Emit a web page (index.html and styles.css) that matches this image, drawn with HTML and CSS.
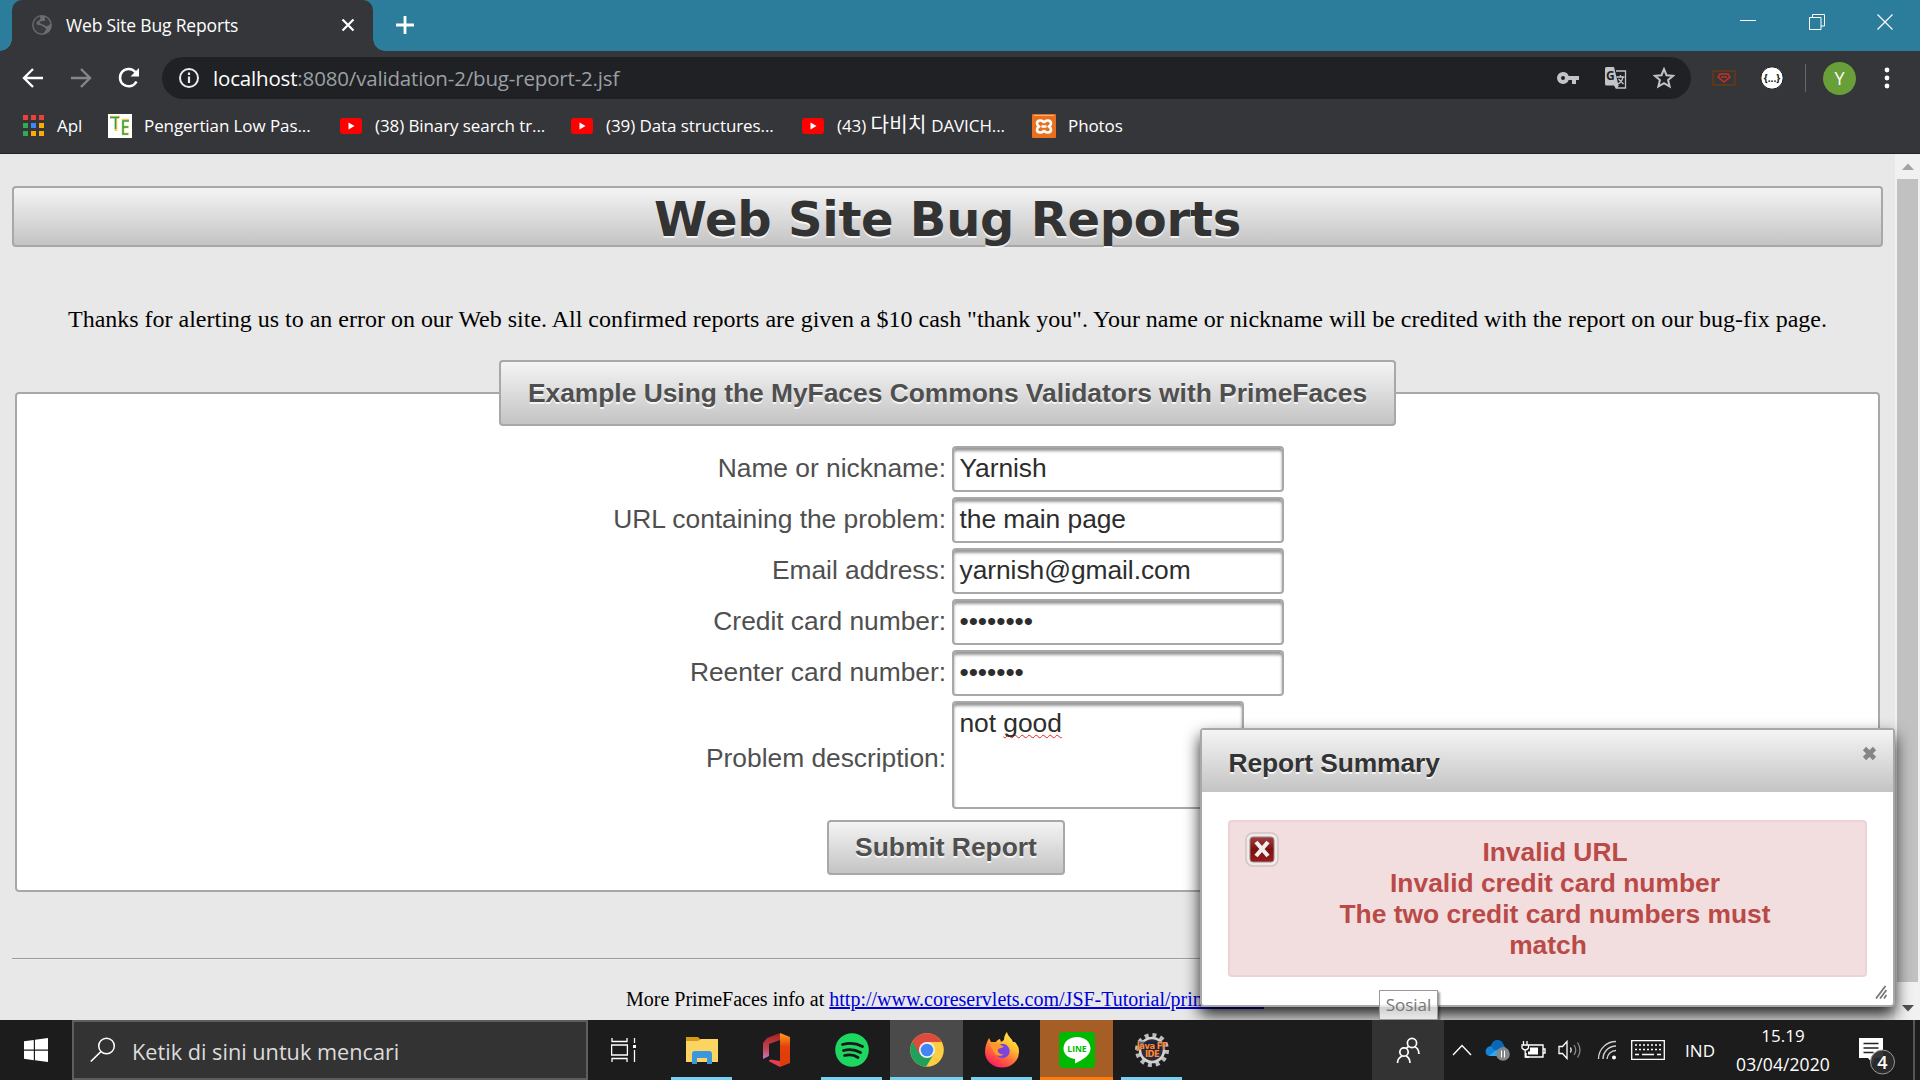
FILE: index.html
```html
<!DOCTYPE html>
<html lang="id">
<head>
<meta charset="utf-8">
<title>Web Site Bug Reports</title>
<link rel="stylesheet" href="styles.css">
</head>
<body>
<div class="tabstrip">
  <div class="tab">
    <svg class="globe" width="22" height="22" viewBox="0 0 22 22"><circle cx="11" cy="11" r="9.900" fill="#6b6d71"/><path d="M9 2.500c1 2 0 3-1 4-2 1-3 2-2 4 2 1 5 0 6 2 1 1 3 1 3 3-1 2-2 3-3 4C6 20 2 15 2.500 10 3 6 6 3 9 2.500zM14 3c3 1 5 4 5.500 7-2 1-3 3-5 2-2-2-5-2-6-3 0-2 3-2 5-2 1-1 0-3 .5-4z" fill="#3a3b3f"/></svg>
    <span class="tab-title">Web Site Bug Reports</span>
    <svg class="tab-close" width="14" height="14" viewBox="0 0 14 14"><path d="M1.500 1.500l11 11M12.500 1.500l-11 11" stroke="#fff" stroke-width="2.200"/></svg>
  </div>
  <svg class="newtab" width="20" height="20" viewBox="0 0 20 20"><path d="M10 1v18M1 10h18" stroke="#fff" stroke-width="2.800"/></svg>
  <div class="winbtns">
    <svg width="16" height="16" viewBox="0 0 16 16"><path d="M0 6.500h16" stroke="#fff"/></svg>
    <svg width="16" height="16" viewBox="0 0 16 16"><path d="M.5 3.500h11.500v12H.5zM3.500 3.500v-3h12v11.500h-3.500" fill="none" stroke="#fff"/></svg>
    <svg width="16" height="16" viewBox="0 0 16 16"><path d="M.5.5l15 15M15.500.5l-15 15" stroke="#fff" stroke-width="1.200"/></svg>
  </div>
</div>
<div class="toolbar">
  <div class="nav">
    <svg width="22" height="22" viewBox="0 0 22 22"><path d="M21 11H2.500M11 2l-9 9 9 9" fill="none" stroke="#fff" stroke-width="2.400"/></svg>
    <svg width="22" height="22" viewBox="0 0 22 22"><path d="M1 11h18.500M11 2l9 9-9 9" fill="none" stroke="#85868a" stroke-width="2.400"/></svg>
    <svg width="22" height="22" viewBox="0 0 22 22"><path d="M18.500 14.500A8.700 8.700 0 1 1 17.500 5.200" fill="none" stroke="#fff" stroke-width="2.500"/><path d="M21 1v8.500h-8.500z" fill="#fff"/></svg>
  </div>
  <div class="omnibox">
    <svg width="22" height="22" viewBox="0 0 22 22"><circle cx="11" cy="11" r="9" fill="none" stroke="#e8eaed" stroke-width="2"/><path d="M11 9.500v6.500M11 5.500v2.400" stroke="#e8eaed" stroke-width="2.200"/></svg>
    <span class="url"><b>localhost</b>:8080/validation-2/bug-report-2.jsf</span>
    <div class="omni-icons">
      <svg width="22" height="22" viewBox="0 0 22 22"><path fill="#c4c4c6" fill-rule="evenodd" d="M6 5a6 6 0 1 0 5.700 8H15v4h4v-4h3V9H11.700A6 6 0 0 0 6 5zm0 4a2 2 0 1 1 0 4 2 2 0 0 1 0-4z"/></svg>
      <svg width="22" height="22" viewBox="0 0 22 22"><path d="M11 4h9.500v17H12l-1-4" fill="none" stroke="#c4c4c6" stroke-width="1.300"/><path d="M1.500 0H9l4.500 18.500h-12A1.500 1.500 0 0 1 0 17V1.500A1.500 1.500 0 0 1 1.500 0zM9 18.500h5L11 22z" fill="#c4c4c6"/><text x="1" y="13" class="g-mark">G</text><path d="M11.500 10h8M15.500 8v2M18 10c-1 4-3 6-5 7M13.500 12l5 5" fill="none" stroke="#c4c4c6" stroke-width="1.300"/></svg>
      <svg width="22" height="22" viewBox="0 0 22 22"><path d="M11 2.200l2.500 6 6.500.600-4.900 4.300 1.500 6.400-5.600-3.400-5.600 3.400 1.500-6.400L2 8.800l6.500-.600z" fill="none" stroke="#c4c4c6" stroke-width="2"/></svg>
    </div>
  </div>
  <svg class="ext1" width="24" height="16" viewBox="0 0 24 16"><path d="M1 1h22v14H1z" fill="none" stroke="#6b3a12" stroke-width="1.300"/><path d="M8 4h8l2 3-6 5-6-5zM9 7h6" fill="none" stroke="#c5301e" stroke-width="1.500"/></svg>
  <svg class="ext2" width="24" height="24" viewBox="0 0 24 24"><circle cx="12" cy="12" r="11.200" fill="#fff" stroke="#18191b"/><text x="12" y="15.500" class="braces">{...}</text></svg>
  <div class="sep"></div>
  <div class="avatar">Y</div>
  <svg class="menu" width="6" height="24" viewBox="0 0 6 24"><g fill="#fff"><circle cx="3" cy="3" r="2.400"/><circle cx="3" cy="11" r="2.400"/><circle cx="3" cy="19" r="2.400"/></g></svg>
</div>
<div class="bookmarks">
  <div class="bm bm-apps"><svg width="21" height="21" viewBox="0 0 21 21"><path d="M0 0h5v5H0zM8 0h5v5H8zM16 0h5v5h-5z" fill="#ea4335"/><path d="M0 8h5v5H0zM0 16h5v5H0z" fill="#34a853"/><path d="M8 8h5v5H8z" fill="#4285f4"/><path d="M16 8h5v5h-5zM16 16h5v5h-5zM8 16h5v5H8z" fill="#fbab05"/></svg><span>Apl</span></div>
  <div class="bm bm-te"><svg width="24" height="24" viewBox="0 0 24 24"><path d="M0 0h24v24H0z" fill="#fff"/><path d="M2 3h10M8 3v14M21 6h-6v14h6M15 13h6" fill="none" stroke="#f0d040" stroke-width="2.600"/><path d="M2 3.500h9M7.500 4v11M21 7h-6v13h5M15 13h5" fill="none" stroke="#2e9c58" stroke-width="1.500"/></svg><span>Pengertian Low Pas...</span></div>
  <div class="bm bm-y1"><svg width="22" height="16" viewBox="0 0 22 16"><rect width="22" height="16" rx="3" fill="#f00"/><path d="M8.500 4.500v7l6-3.500z" fill="#fff"/></svg><span>(38) Binary search tr...</span></div>
  <div class="bm bm-y2"><svg width="22" height="16" viewBox="0 0 22 16"><rect width="22" height="16" rx="3" fill="#f00"/><path d="M8.500 4.500v7l6-3.500z" fill="#fff"/></svg><span>(39) Data structures...</span></div>
  <div class="bm bm-y3"><svg width="22" height="16" viewBox="0 0 22 16"><rect width="22" height="16" rx="3" fill="#f00"/><path d="M8.500 4.500v7l6-3.500z" fill="#fff"/></svg><span>(43) <span class="hangul">다비치</span> DAVICH...</span></div>
  <div class="bm bm-ph"><svg width="24" height="24" viewBox="0 0 24 24"><rect width="24" height="24" rx="1" fill="#e8701f"/><path d="M2 1.500h20" stroke="#f5b183"/><path d="M12 9C11 5.500 5 5.500 5 9.500c0 1.500 1 2 2 3-1 1-2 1.500-2 3 0 4 6 4 7 .500M12 9c1-3.500 7-3.500 7 .500 0 1.500-1 2-2 3 1 1 2 1.500 2 3 0 4-6 4-7 .500M9.500 12.500h5" fill="none" stroke="#fff" stroke-width="2.600"/></svg><span>Photos</span></div>
</div>
<div class="viewport">
  <main class="page">
    <h1>Web Site Bug Reports</h1>
    <p class="thanks">Thanks for alerting us to an error on our Web site. All confirmed reports are given a $10 cash "thank you". Your name or nickname will be credited with the report on our bug-fix page.</p>
    <fieldset>
      <legend>Example Using the MyFaces Commons Validators with PrimeFaces</legend>
      <div class="form">
        <span class="label">Name or nickname:</span><div class="field">Yarnish</div>
        <span class="label">URL containing the problem:</span><div class="field">the main page</div>
        <span class="label">Email address:</span><div class="field">yarnish@gmail.com</div>
        <span class="label">Credit card number:</span><div class="field">••••••••</div>
        <span class="label">Reenter card number:</span><div class="field">•••••••</div>
        <span class="label label-area">Problem description:</span><div class="field area">not&nbsp;<span class="misspelt">good</span></div>
      </div>
      <div class="submit">Submit Report</div>
    </fieldset>
    <hr>
    <p class="more">More PrimeFaces info at <a>http://www.coreservlets.com/JSF-Tutorial/primefaces/</a></p>
  </main>
  <div class="scrollbar">
    <svg width="12" height="7" viewBox="0 0 12 7"><path d="M0 7l6-6.500L12 7z" fill="#a3a3a3"/></svg>
    <div class="thumb"></div>
    <svg width="12" height="7" viewBox="0 0 12 7"><path d="M0 0l6 6.500L12 0z" fill="#505050"/></svg>
  </div>
  <div class="dialog">
    <div class="dialog-head"><span>Report Summary</span>
      <svg width="15" height="15" viewBox="0 0 15 15"><path d="M2.500 2.500l10 10M12.500 2.500l-10 10" stroke="#858585" stroke-width="4.600"/></svg></div>
    <div class="error">
      <svg width="34" height="35" viewBox="0 0 34 35"><defs><linearGradient id="er" x1="0" y1="0" x2="0" y2="1"><stop offset="0" stop-color="#a04040"/><stop offset=".5" stop-color="#7c1010"/><stop offset="1" stop-color="#941d1d"/></linearGradient></defs><rect x="1" y="1" width="32" height="33" rx="7" fill="#f0eaea" stroke="#d3c4c5" stroke-width="1.500"/><rect x="5" y="5" width="24" height="25" rx="3" fill="url(#er)" stroke="#a08585"/><path d="M11 10l12 14M23 10L11 24" stroke="#f1eeee" stroke-width="4.200"/></svg>
      <div class="error-list"><span>Invalid URL</span><span>Invalid credit card number</span><span>The two credit card numbers must</span><span class="wrap-end">match</span></div>
    </div>
    <svg class="grip" width="12" height="14" viewBox="0 0 12 14"><path d="M1 13.500L10.500 1M5 13.500L11.500 5M9 13.500l2.500-3.500" stroke="#777" stroke-width="1.800"/></svg>
  </div>
  <div class="tooltip">Sosial</div>
</div>
<div class="taskbar">
  <div class="start"><svg width="24" height="24" viewBox="0 0 24 24"><path d="M0 3.300l9.800-1.400v9.600H0zM11 1.700L24 0v11.500H11zM0 12.700h9.800v9.500L0 20.800zM11 12.700h13V24l-13-1.800z" fill="#fff"/></svg></div>
  <div class="search"><svg width="26" height="26" viewBox="0 0 26 26"><circle cx="16.500" cy="9" r="7.800" fill="none" stroke="#fff" stroke-width="1.500"/><path d="M11 14.500L.8 24.500" stroke="#fff" stroke-width="1.700"/></svg><span>Ketik di sini untuk mencari</span></div>
  <div class="app tv"><svg width="26" height="24" viewBox="0 0 26 24"><path d="M1 0v3.500h15V0M1 24v-3.500h15V24M.6 7h15.800v10H.6zM23.500 0v5M23.500 12v12" fill="none" stroke="#fff" stroke-width="1.300"/><path d="M22 7h3v3h-3z" fill="#fff"/></svg></div>
  <div class="app run"><svg width="34" height="28" viewBox="0 0 34 28"><path d="M1 1h12l3 3-2 3H1z" fill="#d99a12"/><path d="M1 5h12l3-2h17v23H1z" fill="#fcd462"/><path d="M7 28V18q0-3 3-3h14q3 0 3 3v10h-5v-6H12v6z" fill="#3a96dd"/></svg></div>
  <div class="app"><svg width="30" height="34" viewBox="0 0 30 34"><defs><linearGradient id="of" x1="0" y1="0" x2="0" y2="1"><stop offset="0" stop-color="#a8201c"/><stop offset=".6" stop-color="#c04456"/><stop offset="1" stop-color="#c779c4"/></linearGradient><linearGradient id="og" x1="0" y1="0" x2="0" y2="1"><stop offset="0" stop-color="#ffa01c"/><stop offset=".4" stop-color="#e2420a"/><stop offset="1" stop-color="#dc3a0c"/></linearGradient></defs><path d="M18 0L5 5 1 10v16l6-3V11l11-4z" fill="url(#of)"/><path d="M6.500 28l2-1.500L18 28v6z" fill="#ea3c50"/><path d="M18 0l10 4v26l-10 4z" fill="url(#og)"/></svg></div>
  <div class="app run"><svg width="34" height="34" viewBox="0 0 34 34"><circle cx="17" cy="17" r="16.800" fill="#1ed760"/><path d="M7.500 11.500q11-3 20 2M8.500 17.500q9-2.500 17 2M9.500 22.500q8-2 13.500 2" fill="none" stroke="#191919" stroke-width="2.800" stroke-linecap="round"/></svg></div>
  <div class="app active"><svg width="34" height="34" viewBox="0 0 34 34"><circle cx="17" cy="17" r="16.800" fill="#ffcd42"/><path d="M17 17L2.400 8.700A16.800 16.800 0 0 0 16 33.800l8-13z" fill="#1fa15d"/><path d="M17 9h14.800A16.800 16.800 0 0 0 2.400 8.600L9.500 21z" fill="#dd4b3e"/><circle cx="17" cy="17" r="8" fill="#f1f1f1"/><circle cx="17" cy="17" r="6.300" fill="#4285f4"/></svg></div>
  <div class="app run"><svg width="36" height="36" viewBox="0 0 36 36"><defs><linearGradient id="ff" x1=".8" y1="0" x2=".2" y2="1"><stop offset="0" stop-color="#fff04a"/><stop offset=".35" stop-color="#ffbd30"/><stop offset=".6" stop-color="#ff7139"/><stop offset=".85" stop-color="#ff3350"/><stop offset="1" stop-color="#e31587"/></linearGradient></defs><path d="M5 6l2 4 5 0c2-3 4-3 4-3l1 3 3-2C20 3 23 0 23 0c1 5 5 6 6 10l2 0c4 5 4 7 4 10a17 15.500 0 0 1-34 0C1 14 3 10 5 6z" fill="url(#ff)"/><circle cx="18.500" cy="19" r="7.200" fill="#7a45dd"/><path d="M6 13q6-4 11 0l3 2-6 2c-1 4 3 6 6 5-4 4-10 1-11-4" fill="#ff9a28"/></svg></div>
  <div class="app line"><svg width="36" height="36" viewBox="0 0 36 36"><rect width="36" height="36" rx="4" fill="#00b900"/><path d="M18 5C10 5 4.500 10 4.500 16.500 4.500 22 9 26 16 27l0 4.500c8-4 15.500-8 15.500-15C31.500 10 26 5 18 5z" fill="#fff"/><text x="18" y="19.800" class="line-name">LINE</text></svg></div>
  <div class="app run"><svg class="java-icon" width="36" height="36" viewBox="0 0 36 36"><circle cx="18" cy="18" r="14.800" fill="none" stroke="#bcbcbc" stroke-width="4.500" stroke-dasharray="3.875 3.875"/><circle cx="18" cy="18" r="12" fill="#292b3c" stroke="#d2d2d2" stroke-width="2.600"/><path d="M4 9.500h28v8H4z" fill="#1d1d26" opacity=".55"/><text x="18" y="16.500" class="java">Java FF</text><text x="18" y="25" class="java">IDE</text></svg></div>
  <div class="tray">
    <div class="people"><svg width="24" height="26" viewBox="0 0 24 26"><g fill="none" stroke="#fff" stroke-width="1.700"><circle cx="16" cy="6" r="4.600"/><path d="M19 10q3.500 1 4 7M12.500 9.500l-2 1.500"/><circle cx="8" cy="15" r="4.200"/><path d="M1.500 26c0-4 2-6 5-7M10 19c2 1 4 3 4 7"/></g></svg></div>
    <svg class="t-up" width="20" height="12" viewBox="0 0 20 12"><path d="M1 11l9-9.500L19 11" fill="none" stroke="#fff" stroke-width="1.400"/></svg>
    <svg class="t-cloud" width="26" height="24" viewBox="0 0 26 24"><path d="M6 8C8 0 17 0 19 8c4 2 2 10-2 10H5C-1 18-1 9 6 8z" fill="#1583d8"/><path d="M6 8C8 0 17 0 19 8L10 13z" fill="#0967b8"/><path d="M4 18l7-6 8 6z" fill="#31a9eb"/><circle cx="18" cy="16" r="6.800" fill="#85888b"/><path d="M16.500 12.500v7M19.500 12.500v7" stroke="#fff"/></svg>
    <svg class="t-bat" width="25" height="18" viewBox="0 0 25 18"><path d="M8 4h14v12H5v-4M22 8h2v4h-2" fill="none" stroke="#fff" stroke-width="1.400"/><path d="M9 6.500h8v7H7v-3h2z" fill="#fff"/><path d="M2.500 0v4M6 0v4M1 4h6.500v3Q4.200 11 1 7zM4.200 9v7H8" fill="none" stroke="#fff" stroke-width="1.300"/></svg>
    <svg class="t-vol" width="24" height="20" viewBox="0 0 24 20"><path d="M1 6.500h3.500L9 1.500v17l-4.500-5H1z" fill="none" stroke="#fff" stroke-width="1.300"/><path d="M12.500 7.500q1.500 2.500 0 5" fill="none" stroke="#fff" stroke-width="1.300"/><path d="M16 5q3.500 5 0 10M19.500 2.500q5 7.500 0 15" fill="none" stroke="#888" stroke-width="1.300"/></svg>
    <svg class="t-wifi" width="20" height="20" viewBox="0 0 20 20"><path d="M1.500 19A17.500 17.500 0 0 1 19 1.500M6 19A13 13 0 0 1 19 6M10 19a9 9 0 0 1 9-8.500" fill="none" stroke="#d0d0d0" stroke-width="1.400"/><circle cx="17" cy="17.500" r="2" fill="#fff"/></svg>
    <svg class="t-kb" width="34" height="20" viewBox="0 0 34 20"><path d="M.7.7h32.600v18.600H.7z" fill="none" stroke="#fff" stroke-width="1.300"/><path d="M4 5h26M4 9.500h26" stroke="#fff" stroke-width="1.500" stroke-dasharray="2 2"/><path d="M4 14.500h4M11 14.500h12M26 14.500h4" stroke="#fff" stroke-width="1.500"/></svg>
    <span class="t-lang">IND</span>
    <div class="clock"><span>15.19</span><span class="date">03/04/2020</span></div>
    <svg class="t-note" width="36" height="38" viewBox="0 0 36 38"><path d="M0 0h24v20h-8l-2 6-5-6H0z" fill="#fff"/><path d="M4.500 5.500h15M4.500 10h15M4.500 14.500h10" stroke="#222" stroke-width="1.400"/><circle cx="23.500" cy="24" r="12" fill="#2c2c2c" fill-opacity=".94" stroke="#999"/><text x="23.500" y="30.500" class="note-n">4</text></svg>
  </div>
</div>
</body>
</html>
```
FILE: styles.css
```css
* { box-sizing: border-box; }
body { margin: 0; width: 1920px; height: 1080px; overflow: hidden; display: flex; flex-direction: column; font-family: "Open Sans", "Noto Sans CJK KR", sans-serif; position: relative; }
svg { display: block; flex: none; }
span, a { white-space: nowrap; }

/* Browser chrome */
.tabstrip { height: 51px; flex: none; background: #2c7c9b; display: flex; align-items: flex-start; padding-left: 12px; }
.tab { position: relative; width: 361px; height: 51px; background: #35363a; border-radius: 10px 10px 0 0; display: flex; align-items: center; padding: 0 18px 2px 19px; }
.tab::before, .tab::after { content: ""; position: absolute; bottom: 0; width: 12px; height: 12px; }
.tab::before { left: -12px; background: radial-gradient(circle at 0 0, #2c7c9b 11.500px, #35363a 12px); }
.tab::after { right: -12px; background: radial-gradient(circle at 100% 0, #2c7c9b 11.500px, #35363a 12px); }
.tab-title { margin-left: 13px; color: #fff; font-size: 17.500px; letter-spacing: -.17px; }
.tab-close { margin-left: auto; }
.newtab { margin: 15px 0 0 22px; }
.winbtns { margin: 14px 27px 0 auto; display: flex; gap: 52.500px; }

.toolbar { height: 54px; flex: none; background: #35363a; display: flex; align-items: center; }
.nav { width: 162px; padding-left: 22px; display: flex; gap: 26px; }
.omnibox { width: 1529px; height: 42px; background: #202124; border-radius: 21px; display: flex; align-items: center; padding: 0 16px; }
.url { margin-left: 13px; color: #9aa0a6; font-size: 20.500px; letter-spacing: -.17px; }
.url b { color: #fff; font-weight: 400; }
.omni-icons { margin-left: auto; display: flex; gap: 26px; }
.g-mark { font: bold 12px "Open Sans", sans-serif; fill: #202124; }
.ext1 { margin-left: 21px; }
.ext2 { margin-left: 24px; }
.braces { font: bold 10px "Open Sans", sans-serif; fill: #111; text-anchor: middle; }
.sep { width: 1px; height: 28px; background: #66686c; margin-left: 21px; }
.avatar { width: 33px; height: 33px; border-radius: 50%; background: #689f38; color: #fff; margin-left: 17px; display: flex; align-items: center; justify-content: center; font-size: 18px; }
.menu { margin: 2px 0 0 28px; }

.bookmarks { height: 49px; flex: none; background: #35363a; border-bottom: 1px solid #232427; display: flex; align-items: center; color: #fff; font-size: 17px; letter-spacing: -.09px; padding: 0 0 7px 23px; }
.bm { display: flex; align-items: center; height: 24px; }
.bm-apps { width: 85px; gap: 13px; }
.bm-te { width: 232px; gap: 12px; }
.bm-y1, .bm-y2, .bm-y3 { width: 231px; gap: 13px; }
.bm-y3 { width: 230px; }
.bm-ph { gap: 12px; }
.hangul { font-size: 20px; line-height: 20px; letter-spacing: .4px; }

/* Bug report page */
.viewport { position: relative; height: 866px; flex: none; display: flex; background: #e8e8e8; overflow: hidden; }
.page { width: 1895px; padding: 32px 12px 0; }
h1, legend, .submit { border: 2px solid #a8a8a8; border-radius: 4px; background: linear-gradient(#f4f4f4, #c4c4c4); display: flex; align-items: center; justify-content: center; text-shadow: 0 2px 0 rgba(255,255,255,.8); font-weight: bold; }
h1 { margin: 0; height: 61px; padding-top: 5px; font: bold 48px/48px Verdana, "DejaVu Sans", sans-serif; letter-spacing: -.25px; color: #333; }
.thanks { margin: 58px 0 0; height: 28px; line-height: 28px; text-align: center; white-space: nowrap; font-family: "Liberation Serif", serif; font-size: 24px; letter-spacing: -.01px; }
fieldset { margin: 27px 3px 0; height: 532px; padding: 0; border: 2px solid #a8a8a8; border-radius: 4px; background: #fff; font: 26.400px "Liberation Sans", sans-serif; color: #4f4f4f; }
legend { width: 897px; height: 66px; margin: 0 auto; padding: 0; letter-spacing: -.02px; }
.form { margin-top: 20px; display: grid; grid-template-columns: 929px 1fr; column-gap: 6px; row-gap: 5px; grid-auto-rows: 46px; letter-spacing: -.03px; }
.form > :nth-last-child(-n+2) { height: 108px; }
.label { text-align: right; line-height: 44px; }
.label-area { line-height: 115px; }
.field { width: 332px; border: 2px solid #a8a8a8; border-radius: 4px; color: #2d2d2d; line-height: 40px; padding-left: 5.500px; box-shadow: inset 0 3px 3px #999; letter-spacing: -.06px; }
.area { width: 292px; }
.misspelt { text-decoration: underline wavy #e22 1px; text-underline-offset: 2px; text-decoration-skip-ink: none; }
.submit { width: 238px; height: 55px; margin: 73px 0 0 810px; }
hr { margin: 66px 0 0; border: 0; height: 2px; background: #9c9c9c; border-bottom: 1px solid #eee; }
.more { margin: 27px 0 0 614px; font: 20px/24px "Liberation Serif", serif; white-space: nowrap; }
.more a { color: #0000d8; text-decoration: underline; }
.scrollbar { width: 25px; background: #f1f1f1; display: flex; flex-direction: column; align-items: center; padding-top: 9px; }
.thumb { width: 21px; height: 803px; margin: 9px 0 23px; background: #c1c1c1; }

/* Validation dialog */
.dialog { position: absolute; left: 1200px; top: 574px; width: 695px; height: 279px; border: 2px solid #a8a8a8; border-radius: 4px; background: #fff; box-shadow: 0 8px 16px rgba(0,0,0,.85); font: bold 26.400px "Liberation Sans", sans-serif; color: #333; }
.dialog-head { height: 62px; background: linear-gradient(#f4f4f4, #c4c4c4); display: flex; align-items: center; justify-content: space-between; padding: 5px 16px 0 26.500px; letter-spacing: -.1px; text-shadow: 0 2px 0 rgba(255,255,255,.8); }
.dialog-head svg { margin-top: -20px; }
.error { margin: 28px 26px 0; width: 639px; height: 157px; border: 2px solid #edd3d7; border-radius: 4px; background: #f2dede; display: flex; padding: 10px 0 0 15px; }
.error-list { flex: 1; display: flex; flex-direction: column; align-items: center; color: #b94a48; line-height: 31px; padding: 5px 34px 0 0; }
.wrap-end { margin-right: 16px; }
.wrap-end { margin-right: 14px; }
.grip { position: absolute; right: 6px; bottom: 6px; }
.tooltip { position: absolute; left: 1379px; top: 836px; width: 59px; height: 30px; border: 1px solid #999; background: rgba(255,255,255,.75); color: #777; font-size: 17px; line-height: 28px; text-align: center; box-shadow: 2px 2px 2px rgba(0,0,0,.4); }

/* Windows taskbar */
.taskbar { height: 60px; flex: none; background: #1c1c1c; display: flex; color: #fff; }
.start { width: 72px; display: flex; align-items: center; justify-content: center; }
.search { width: 516px; border: 2px solid #5e5e5e; background: #333; display: flex; align-items: center; padding-left: 16px; font-size: 21.700px; color: #dcdcdc; }
.search span { margin: 3px 0 0 16px; }
.app { width: 61px; margin: 0 7px; display: flex; align-items: center; justify-content: center; }
.tv { width: 74px; margin: 0 1px; padding-right: 4px; }
.run { border-bottom: 3px solid #76d0f2; padding-top: 3px; }
.active { width: 73px; margin: 0 1px; background: #4a4a4a; border-bottom: 3px solid #76d0f2; padding-top: 3px; }
.line { width: 73px; margin: 0 1px; background: #a65e27; border-bottom: 3px solid #ff7d0c; padding-top: 3px; }
.line-name { font: bold 8.500px "Open Sans", sans-serif; fill: #00b900; text-anchor: middle; }
.java-icon { overflow: visible; }
.java { font: bold 8.300px "DejaVu Sans", sans-serif; letter-spacing: -.5px; fill: #ff8a35; text-anchor: middle; }
.tray { flex: 1; display: flex; align-items: center; justify-content: flex-end; font-size: 17px; border-right: 2px solid #555; margin-right: 5px; padding-right: 18px; }
.people { width: 72px; height: 60px; background: #333; display: flex; align-items: center; justify-content: center; }
.t-up { margin-left: 8px; }
.t-cloud { margin-left: 13px; }
.t-bat { margin-left: 10px; }
.t-vol { margin-left: 12px; }
.t-wifi { margin-left: 15px; }
.t-kb { margin-left: 14px; }
.t-lang { margin-left: 20px; }
.clock { width: 110px; margin-left: 13px; display: flex; flex-direction: column; align-items: center; line-height: 28px; }
.date { font-size: 17.500px; letter-spacing: .1px; }
.t-note { margin: 14px 0 0 21px; }
.note-n { font: 600 18px "Open Sans", sans-serif; fill: #fff; text-anchor: middle; }
```
